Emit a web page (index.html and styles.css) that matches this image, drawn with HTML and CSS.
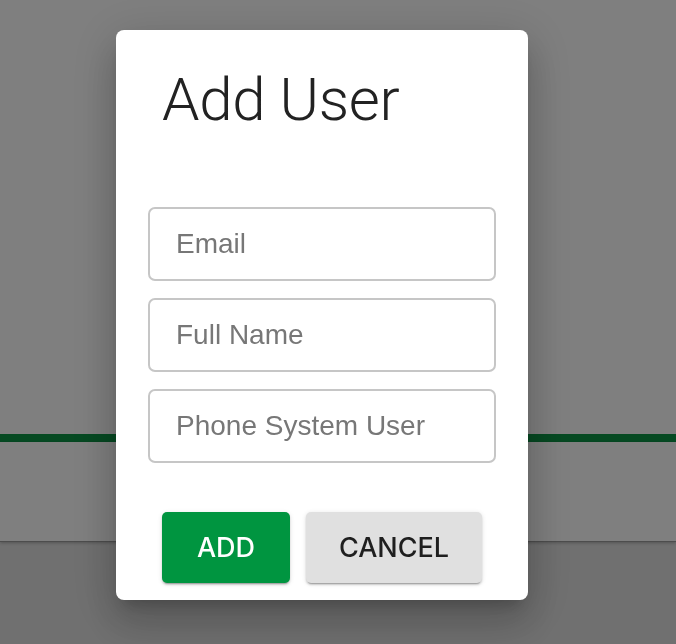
FILE: index.html
```html
<!DOCTYPE html>
<html lang="en">
<head>
<meta charset="utf-8">
<title>Add User</title>
<link rel="stylesheet" href="styles.css">
</head>
<body>
<div class="page">
  <div class="page-top"></div>
  <div class="page-bar"></div>
  <div class="page-band"></div>
  <div class="page-footer"></div>
</div>
<div class="overlay">
  <div class="dialog" role="dialog" aria-labelledby="dlg-title">
    <h1 class="dialog-title" id="dlg-title">Add User</h1>
    <form class="dialog-form">
      <input class="field" type="text" placeholder="Email">
      <input class="field" type="text" placeholder="Full Name">
      <input class="field" type="text" placeholder="Phone System User">
    </form>
    <div class="dialog-actions">
      <button class="btn btn-primary" type="button">Add</button>
      <button class="btn btn-secondary" type="button">Cancel</button>
    </div>
  </div>
</div>
</body>
</html>
```
FILE: styles.css
```css
html, body {
  margin: 0;
  padding: 0;
  height: 100%;
}
body {
  font-family: "Liberation Sans", Arial, sans-serif;
  background: #e0e0e0;
  overflow: hidden;
}
.page {
  display: flex;
  flex-direction: column;
  height: 100%;
}
.page-top {
  height: 434px;
  background: #ffffff;
}
.page-bar {
  height: 8px;
  background: #0c9445;
}
.page-band {
  height: 99px;
  background: #ffffff;
  border-bottom: 1px solid #9a9a9a;
  box-shadow: 0 1px 3px rgba(0,0,0,0.25);
  position: relative;
}
.page-footer {
  flex: 1;
  background: #e0e0e0;
}
.overlay {
  position: fixed;
  inset: 0;
  background: rgba(0,0,0,0.5);
  display: flex;
  align-items: flex-start;
  padding: 30px 0 0 116px;
}
.dialog {
  width: 412px;
  height: 570px;
  box-sizing: border-box;
  background: #ffffff;
  border-radius: 8px;
  padding: 40px 32px 17px 32px;
  display: flex;
  flex-direction: column;
  box-shadow: 0 11px 15px -7px rgba(0,0,0,0.2), 0 24px 38px 3px rgba(0,0,0,0.14), 0 9px 46px 8px rgba(0,0,0,0.12);
}
.dialog-title {
  margin: 0 0 0 14px;
  font-family: Roboto, "Liberation Sans", sans-serif;
  font-weight: 300;
  font-size: 60px;
  line-height: 60px;
  color: #222222;
  letter-spacing: -0.3px;
}
.dialog-form {
  margin-top: 77px;
  display: flex;
  flex-direction: column;
  gap: 17px;
}
.field {
  height: 74px;
  box-sizing: border-box;
  border: 2px solid #c6c6c6;
  border-radius: 7px;
  padding: 0 24px 0 26px;
  font-family: "Liberation Sans", Arial, sans-serif;
  font-size: 28px;
  color: #222;
  background: #fff;
  outline: none;
}
.field::placeholder {
  color: #777777;
  opacity: 1;
}
.dialog-actions {
  margin-top: auto;
  display: flex;
  gap: 16px;
  padding-left: 14px;
}
.btn {
  height: 71px;
  border: none;
  border-radius: 5px;
  font-family: Inter, "Liberation Sans", sans-serif;
  font-weight: 500;
  font-size: 27px;
  letter-spacing: 0;
  text-transform: uppercase;
  padding: 0;
  box-shadow: 0 3px 1px -2px rgba(0,0,0,0.2), 0 2px 2px 0 rgba(0,0,0,0.14), 0 1px 5px 0 rgba(0,0,0,0.12);
}
.btn-primary {
  width: 128px;
  background: #009540;
  color: #ffffff;
}
.btn-secondary {
  width: 176px;
  background: #e0e0e0;
  color: #1f1f1f;
}
```
